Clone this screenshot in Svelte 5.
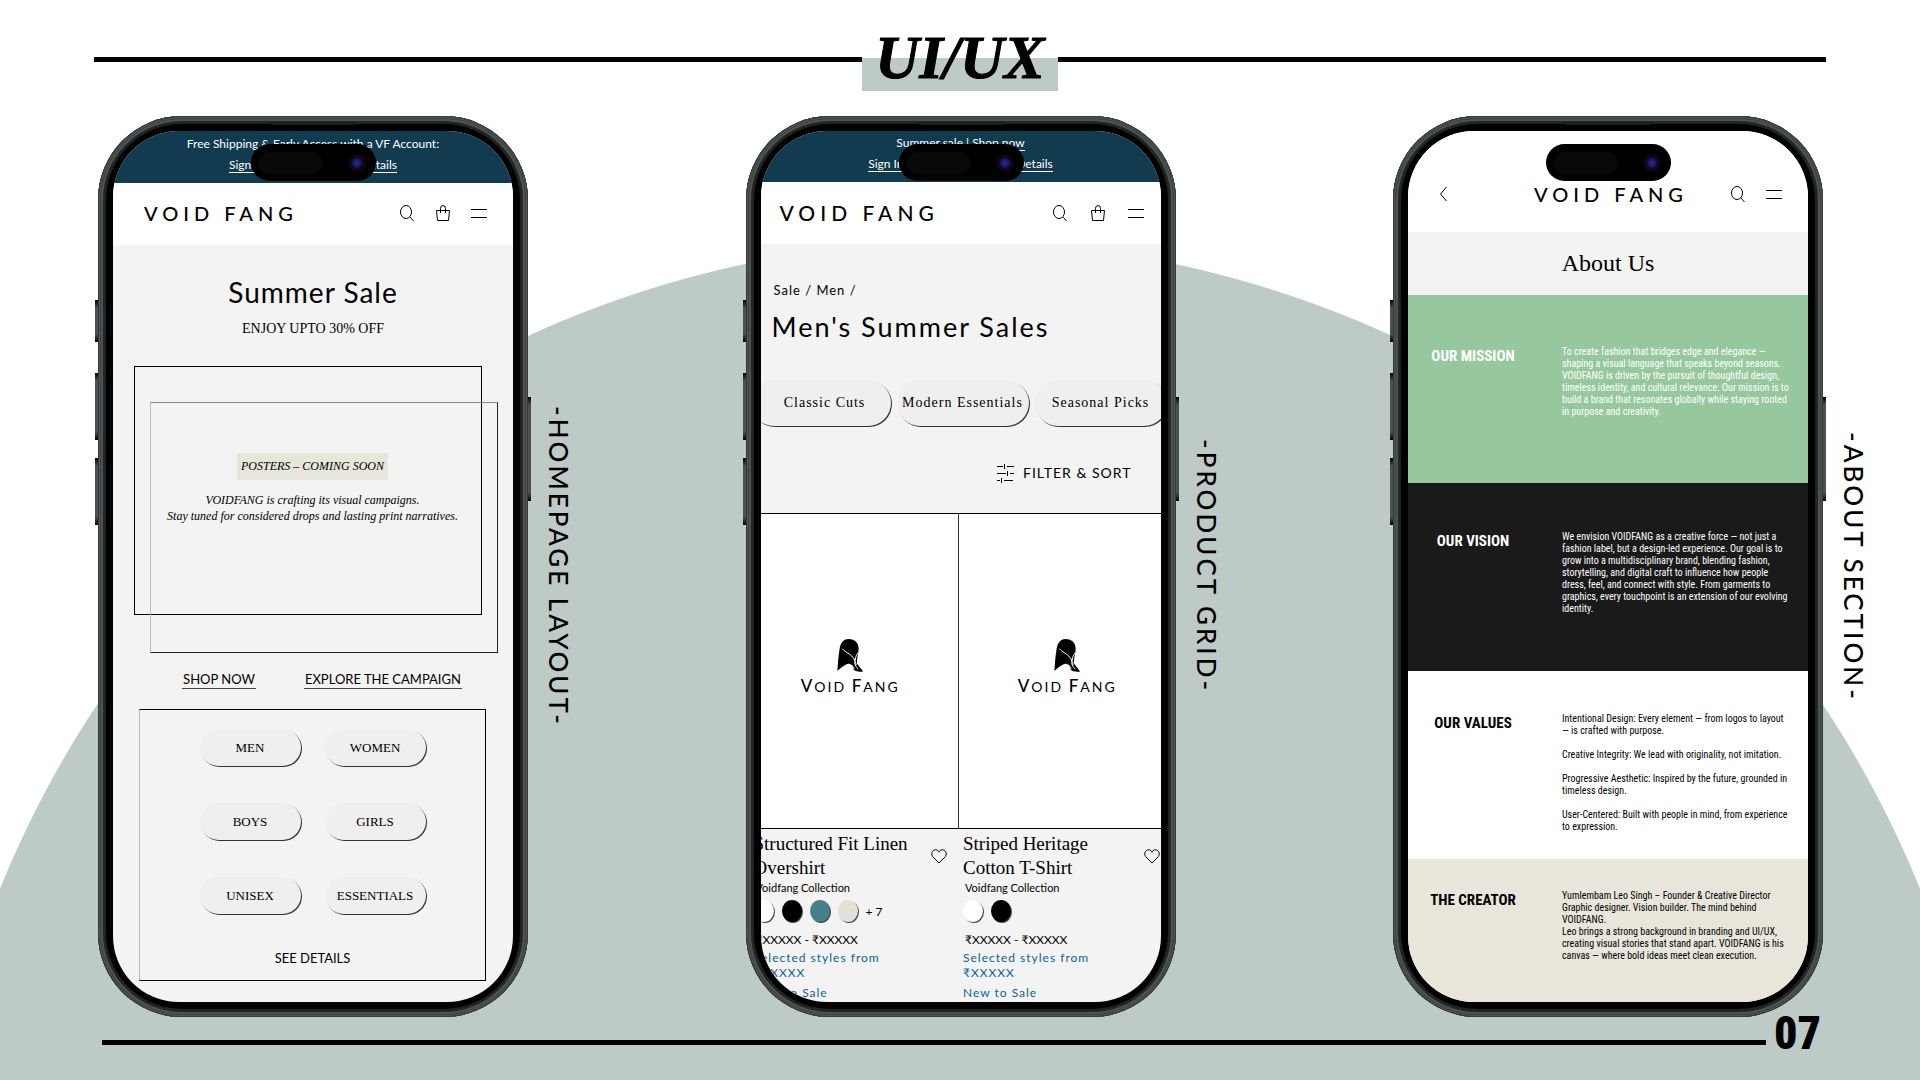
<script>
  const categories = ['MEN', 'WOMEN', 'BOYS', 'GIRLS', 'UNISEX', 'ESSENTIALS'];
  const filters = ['Classic Cuts', 'Modern Essentials', 'Seasonal Picks'];
  const products = [
    { name: ['Structured Fit Linen', 'Overshirt'], swatches: ['white', 'black', 'teal', 'sand'], more: '+ 7' },
    { name: ['Striped Heritage', 'Cotton T-Shirt'], swatches: ['white', 'black'], more: '' }
  ];
  const about = [
    {
      tone: 'mission',
      title: 'OUR MISSION',
      lines: [
        'To create fashion that bridges edge and elegance —',
        'shaping a visual language that speaks beyond seasons.',
        'VOIDFANG is driven by the pursuit of thoughtful design,',
        'timeless identity, and cultural relevance. Our mission is to',
        'build a brand that resonates globally while staying rooted',
        'in purpose and creativity.'
      ]
    },
    {
      tone: 'vision',
      title: 'OUR VISION',
      lines: [
        'We envision VOIDFANG as a creative force — not just a',
        'fashion label, but a design-led experience. Our goal is to',
        'grow into a multidisciplinary brand, blending fashion,',
        'storytelling, and digital craft to influence how people',
        'dress, feel, and connect with style. From garments to',
        'graphics, every touchpoint is an extension of our evolving',
        'identity.'
      ]
    },
    {
      tone: 'values',
      title: 'OUR VALUES',
      lines: [
        'Intentional Design: Every element — from logos to layout',
        '— is crafted with purpose.',
        '',
        'Creative Integrity: We lead with originality, not imitation.',
        '',
        'Progressive Aesthetic: Inspired by the future, grounded in',
        'timeless design.',
        '',
        'User-Centered: Built with people in mind, from experience',
        'to expression.'
      ]
    },
    {
      tone: 'creator',
      title: 'THE CREATOR',
      lines: [
        'Yumlembam Leo Singh – Founder & Creative Director',
        'Graphic designer. Vision builder. The mind behind',
        'VOIDFANG.',
        'Leo brings a strong background in branding and UI/UX,',
        'creating visual stories that stand apart. VOIDFANG is his',
        'canvas — where bold ideas meet clean execution.'
      ]
    }
  ];
</script>

{#snippet searchIcon()}
  <button class="icon" aria-label="Search">
    <svg width="16" height="18" viewBox="0 0 16 18"><ellipse cx="7" cy="8" rx="5.5" ry="6.5" /><path d="M11 13l3.5 4" /></svg>
  </button>
{/snippet}

{#snippet bagIcon()}
  <button class="icon" aria-label="Bag">
    <svg width="16" height="18" viewBox="0 0 16 18"><path d="M1.500 6.500h13l-1 10h-11zM5.500 9V4.500a2.500 3 0 0 1 5 0V9" /></svg>
  </button>
{/snippet}

{#snippet menuIcon()}
  <button class="icon" aria-label="Menu">
    <svg width="16" height="18" viewBox="0 0 16 18"><path d="M0 5.500h16M0 13.500h16" /></svg>
  </button>
{/snippet}

{#snippet hardware()}
  <i class="key action"></i>
  <i class="key up"></i>
  <i class="key down"></i>
  <i class="key power"></i>
  <i class="earpiece"></i>
  <div class="island"><i class="sensor"></i><i class="lens"></i></div>
{/snippet}

<div class="board">
  <header class="top">
    <span class="rule"></span>
    <h1>UI/UX</h1>
    <span class="rule"></span>
  </header>

  <main>
    <section class="unit">
      <div class="phone">
        <div class="screen">
          <div class="banner">
            <p>Free Shipping &amp; Early Access with a VF Account:</p>
            <p><a href="#signin">Sign In / Join Now for all Details</a></p>
          </div>
          <div class="bar">
            <span class="logo">VOID FANG</span>
            {@render searchIcon()}
            {@render bagIcon()}
            {@render menuIcon()}
          </div>
          <div class="intro">
            <h2>Summer Sale</h2>
            <p>ENJOY UPTO 30% OFF</p>
          </div>
          <div class="poster">
            <span class="soon">POSTERS – COMING SOON</span>
            <p>VOIDFANG is crafting its visual campaigns.<br />Stay tuned for considered drops and lasting print narratives.</p>
          </div>
          <div class="links">
            <a href="#shop">SHOP NOW</a>
            <a href="#campaign">EXPLORE THE CAMPAIGN</a>
          </div>
          <div class="cats">
            <div class="catgrid">
              {#each categories as c}
                <button class="pill">{c}</button>
              {/each}
            </div>
            <a href="#details">SEE DETAILS</a>
          </div>
        </div>
        {@render hardware()}
      </div>
      <h3>-HOMEPAGE LAYOUT-</h3>
    </section>

    <section class="unit">
      <div class="phone">
        <div class="screen shop">
          <div class="banner">
            <p>Summer sale | <a href="#sale">Shop now</a></p>
            <p><a href="#signin">Sign In / Join Now for More Details</a></p>
          </div>
          <div class="bar">
            <span class="logo">VOID FANG</span>
            {@render searchIcon()}
            {@render bagIcon()}
            {@render menuIcon()}
          </div>
          <nav class="crumbs">Sale / Men /</nav>
          <h2>Men's Summer Sales</h2>
          <div class="chips">
            {#each filters as f}
              <button class="pill">{f}</button>
            {/each}
          </div>
          <button class="filter">
            <svg width="17" height="19" viewBox="0 0 17 19"><path d="M0 2.500h6M7.500 0v5M10 2.500h7M0 9.500h9M10.500 7v5M13 9.500h4M0 16.500h3M4.500 14v5M7 16.500h9" /></svg>
            FILTER &amp; SORT
          </button>
          <div class="grid">
            {#each products as p}
              <article>
                <div class="photo">
                  <svg width="28" height="34" viewBox="0 0 28 35">
                    <path class="ink" d="M1 34C1.500 27 2 19 3 13 4 5 7 1 12.500 1 18 1 22 4 22.700 9c.5 4-.2 7-1.200 11l-.5 6 6.500 8.500c-3 .3-7 .5-9.500-1.500l-2-5c-2-2-4-2-6-.8C7 29 4 31 1 34z" />
                    <path class="cut" d="M6 11c4 5 12 5 14.500 17M22.500 15c-3 4-3 6-3 8M19.500 21c-1.500 4-1 7 3 11M16 28l2.500 4" />
                  </svg>
                  <span class="word"><b>V</b>OID <b>F</b>ANG</span>
                </div>
                <div class="info">
                  <div class="name">
                    <h4>{p.name[0]}<br />{p.name[1]}</h4>
                    <button class="icon" aria-label="Save {p.name.join(' ')}">
                      <svg width="16" height="15" viewBox="0 0 16 15"><path d="M8 14L1.500 7.500C-.5 4 2 .7 4.700.7 6.500.7 7.500 2 8 3.200 8.500 2 9.500.7 11.300.7 14 .7 16.500 4 14.500 7.500z" /></svg>
                    </button>
                  </div>
                  <p class="coll">Voidfang Collection</p>
                  <div class="swatches">
                    {#each p.swatches as s}<i class={s}></i>{/each}
                    {#if p.more}<span>{p.more}</span>{/if}
                  </div>
                  <p class="price">₹XXXXX - ₹XXXXX</p>
                  <p class="deal">Selected styles from<br />₹XXXXX</p>
                  <p class="deal">New to Sale</p>
                </div>
              </article>
            {/each}
          </div>
        </div>
        {@render hardware()}
      </div>
      <h3>-PRODUCT GRID-</h3>
    </section>

    <section class="unit">
      <div class="phone">
        <div class="screen about">
          <div class="bar">
            <button class="icon" aria-label="Back">
              <svg width="16" height="18" viewBox="0 0 16 18"><path d="M10.500 2l-6 7 6 7" /></svg>
            </button>
            <span class="logo">VOID FANG</span>
            {@render searchIcon()}
            {@render menuIcon()}
          </div>
          <h2>About Us</h2>
          {#each about as a}
            <section class="block {a.tone}">
              <h4>{a.title}</h4>
              <p>{#each a.lines as line}{line}<br />{/each}</p>
            </section>
          {/each}
        </div>
        {@render hardware()}
      </div>
      <h3>-ABOUT SECTION-</h3>
    </section>
  </main>

  <footer>
    <span class="rule"></span>
    <strong>07</strong>
  </footer>
</div>

<style>
  :global(body) {
    background: #fff;
  }
  * {
    box-sizing: border-box;
  }
  h1, h2, h3, h4, p {
    margin: 0;
    font-weight: 400;
  }
  a {
    color: inherit;
    text-decoration: none;
  }
  button {
    padding: 0;
    border: 0;
    background: none;
    color: inherit;
    font: inherit;
  }
  .board {
    min-height: 100vh;
    display: flex;
    flex-direction: column;
    overflow: hidden;
    color: #000;
    font-family: Lato, sans-serif;
    background: radial-gradient(circle at 50% 1277px, #becac6 1035px, transparent 1036px);
  }

  .top {
    display: flex;
    align-items: center;
    padding: 28px 94px 0;
  }
  .rule {
    flex: 1;
    height: 5px;
    background: #000;
  }
  h1 {
    width: 196px;
    padding-bottom: 3px;
    text-align: center;
    font: italic 700 61px/60px "Liberation Serif", serif;
    -webkit-text-stroke: 1px #000;
    background: linear-gradient(transparent 30px, #becac6 30px);
  }

  main {
    display: flex;
    justify-content: space-between;
    padding: 25px 50px 0 98px;
  }
  .unit {
    display: flex;
    align-items: center;
    gap: 15px;
  }
  h3 {
    width: 32px;
    writing-mode: vertical-rl;
    font-size: 26px;
    line-height: 32px;
    font-weight: 500;
    letter-spacing: 3px;
    white-space: nowrap;
  }

  .phone {
    position: relative;
    width: 430px;
    padding: 15px;
    border-radius: 84px;
    background: #000;
    box-shadow:
      inset 0 0 0 1px #363939,
      inset 0 0 0 2px #4f5555,
      inset 0 0 0 3px #3d4242,
      inset 0 0 0 5px #4d5353,
      inset 0 0 1px 8px #242626;
  }
  .screen {
    height: 871px;
    overflow: hidden;
    border-radius: 66px;
    background: #f3f3f3;
  }
  .key {
    position: absolute;
    left: -3px;
    width: 3px;
    background: linear-gradient(#000, #4b5050 8px calc(100% - 8px), #000);
  }
  .action { top: 184px; height: 42px; }
  .up { top: 257px; height: 67px; }
  .down { top: 342px; height: 67px; }
  .power { top: 281px; left: auto; right: -3px; height: 104px; }
  .earpiece {
    position: absolute;
    top: 6px;
    left: 50%;
    width: 86px;
    height: 3px;
    margin-left: -43px;
    border-radius: 2px;
    background: #1b1d1d;
  }
  .island {
    position: absolute;
    top: 28px;
    left: 50%;
    width: 125px;
    height: 37px;
    margin-left: -62px;
    padding: 0 10px 0 7px;
    display: flex;
    align-items: center;
    justify-content: space-between;
    border-radius: 19px;
    background: #000;
  }
  .sensor {
    width: 65px;
    height: 22px;
    border-radius: 11px;
    background: #080808;
  }
  .lens {
    width: 18px;
    height: 18px;
    border-radius: 50%;
    background: radial-gradient(circle, #262a90 1px, #14165c 4px, #12061a 6px, #0a040c 9px);
  }

  .banner {
    height: 52px;
    padding-top: 2px;
    text-align: center;
    color: #fff;
    background: #123b50;
    font-size: 12px;
    line-height: 21px;
  }
  .banner a {
    border-bottom: 1px solid #fff;
  }
  .bar {
    height: 62px;
    display: flex;
    align-items: center;
    gap: 20px;
    padding: 0 26px 2px 31px;
    background: #fff;
  }
  .logo {
    flex: 1;
    font-size: 20px;
    line-height: 24px;
    font-weight: 500;
    letter-spacing: 5px;
    white-space: nowrap;
  }
  .icon {
    display: flex;
  }
  svg {
    fill: none;
    stroke: #000;
    stroke-width: 1;
  }
  .pill {
    border-radius: 23px;
    background: #efefef;
    box-shadow: 1px 1px 0 #333;
    font-family: "Liberation Serif", serif;
    white-space: nowrap;
  }
  h2 {
    font-size: 28px;
    line-height: 32px;
    letter-spacing: 1px;
  }

  .intro {
    padding-top: 31px;
    text-align: center;
  }
  .intro p {
    padding-top: 11px;
    font: 14px/20px "Liberation Serif", serif;
  }
  .poster {
    position: relative;
    width: 348px;
    height: 249px;
    margin: 27px 0 0 21px;
    padding: 86px 0 0 9px;
    border: 1px solid #000;
    text-align: center;
    font: italic 12px/16px "Liberation Serif", serif;
  }
  .poster::after {
    content: "";
    position: absolute;
    top: 35px;
    left: 15px;
    width: 346px;
    height: 249px;
    border: 1px solid #222;
    border-top-color: #888;
    border-left-color: #bbb;
  }
  .soon {
    display: inline-block;
    padding: 0 4px;
    line-height: 27px;
    background: #e7e6da;
  }
  .poster p {
    margin: 12px -10px 0;
    white-space: nowrap;
  }
  .links {
    display: flex;
    justify-content: center;
    gap: 48px;
    padding-top: 55px;
    padding-left: 18px;
    font-size: 13px;
    line-height: 18px;
  }
  .links a {
    padding: 0 1px;
    border-bottom: 1px solid #444;
  }
  .cats {
    width: 347px;
    height: 272px;
    margin: 20px 0 0 26px;
    padding-top: 19px;
    border: 1px solid #000;
    border-left-color: #bbb;
    text-align: center;
    font-size: 13px;
  }
  .catgrid {
    display: grid;
    grid-template-columns: 101px 101px;
    gap: 37px 24px;
    justify-content: center;
    padding-bottom: 36px;
  }
  .cats .pill {
    height: 37px;
    font-size: 13px;
  }

  .shop .banner {
    height: 51px;
    padding-top: 1px;
  }
  .shop .bar {
    padding: 0 17px 1px 19px;
    gap: 22px;
  }
  .shop .logo {
    font-size: 21px;
  }
  .crumbs {
    padding: 37px 0 0 13px;
    font-size: 13px;
    line-height: 18px;
    letter-spacing: 1px;
  }
  .shop h2 {
    padding: 12px 0 0 11px;
    font-size: 27px;
    letter-spacing: 2px;
  }
  .chips {
    display: flex;
    gap: 6px;
    margin: 37px -6px 0 -10px;
  }
  .chips .pill {
    flex: 1;
    height: 46px;
    font-size: 14px;
    letter-spacing: 1px;
  }
  .chips .pill:first-child {
    padding-left: 8px;
  }
  .filter {
    display: flex;
    align-items: center;
    gap: 9px;
    margin: 37px 29px 0 auto;
    font-size: 14px;
    line-height: 20px;
    letter-spacing: 1px;
  }
  .grid {
    display: grid;
    grid-template-columns: 1fr 1fr;
    margin: 30px -15px 0 -18px;
    border-top: 1px solid #000;
  }
  .photo {
    height: 315px;
    display: flex;
    flex-direction: column;
    align-items: center;
    justify-content: center;
    gap: 4px;
    padding-bottom: 8px;
    border-bottom: 1px solid #000;
    background: #fff;
  }
  article:first-child .photo {
    border-right: 1px solid #333;
  }
  .ink {
    fill: #000;
    stroke: none;
  }
  .cut {
    stroke: #fff;
  }
  .word {
    font-size: 14px;
    line-height: 20px;
    letter-spacing: 2px;
  }
  .word b {
    font-size: 17px;
    font-weight: 500;
  }
  .info {
    padding: 3px 16px 0 4px;
    font-size: 12px;
    line-height: 15px;
  }
  article:first-child .info {
    padding: 3px 12px 0 11px;
  }
  .name {
    display: flex;
    justify-content: space-between;
    align-items: center;
  }
  h4 {
    font: 19px/24px "Liberation Serif", serif;
    white-space: nowrap;
  }
  .coll {
    padding-left: 2px;
    font-size: 11px;
  }
  .swatches {
    display: flex;
    align-items: center;
    gap: 8px;
    height: 32px;
  }
  .swatches i {
    width: 20px;
    height: 22px;
    border-radius: 50%;
    box-shadow: 1px 1px 0 #444;
  }
  .white { background: #fff; }
  .black { background: #000; }
  .teal { background: #47808b; }
  .sand { background: #e4dfd8; }
  .price {
    padding: 5px 2px 3px;
  }
  .deal {
    padding-bottom: 5px;
    color: #0f5f96;
    letter-spacing: 1px;
  }

  .about .bar {
    height: 101px;
    padding: 24px 26px 0 28px;
  }
  .about .logo {
    text-align: center;
    padding-left: 40px;
  }
  .about h2 {
    height: 63px;
    text-align: center;
    font: 24px/63px "Liberation Serif", serif;
    letter-spacing: 0;
  }
  .block {
    height: 188px;
    display: grid;
    grid-template-columns: 130px 1fr;
    column-gap: 24px;
  }
  .block h4 {
    text-align: center;
    font: 700 15px/20px "Roboto Condensed", "Liberation Sans Narrow", Roboto, sans-serif;
  }
  .block p {
    font: 10px/12px "Roboto Condensed", "Liberation Sans Narrow", Roboto, sans-serif;
    white-space: nowrap;
  }
  .mission { padding-top: 51px; background: #97c89d; color: #fff; }
  .vision { padding-top: 48px; background: #1a1a1a; color: #fff; }
  .values { padding-top: 42px; background: #fff; }
  .creator { padding-top: 31px; background: #e8e6da; }

  footer {
    display: flex;
    align-items: flex-start;
    gap: 8px;
    padding: 0 99px 0 102px;
  }
  footer .rule {
    margin-top: 23px;
  }
  strong {
    font: 900 46px/32px "Roboto Condensed", "Liberation Sans Narrow", Roboto, sans-serif;
  }
</style>
